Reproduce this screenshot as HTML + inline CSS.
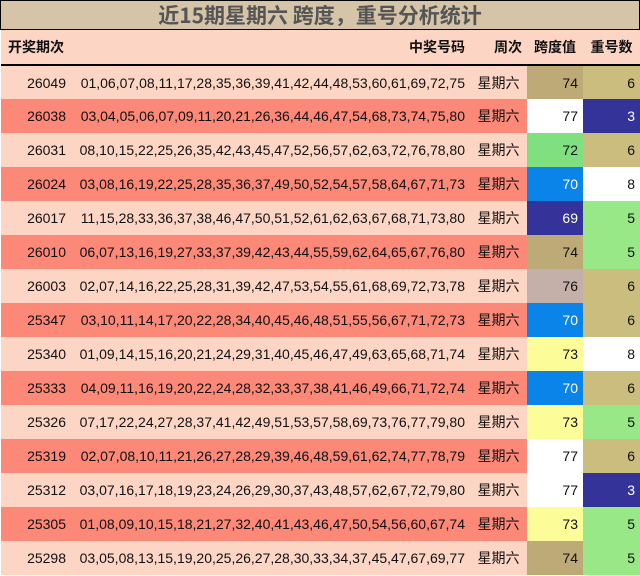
<!DOCTYPE html>
<html><head><meta charset="utf-8"><style>
*{margin:0;padding:0;box-sizing:border-box}
body{width:640px;height:576px;background:#fff;font-family:"Liberation Sans","Noto Sans CJK SC",sans-serif;overflow:hidden;position:relative}
.title{position:absolute;left:0;top:0;width:640px;height:30px;background:#d5c4a8;border:1px solid #000;text-align:center;font:bold 21px/28px "Liberation Serif","Noto Sans CJK SC",serif;color:#555}
.title span{font-family:"Noto Sans CJK SC",sans-serif}
table{position:absolute;left:1px;top:30px;width:639px;border-collapse:collapse;table-layout:fixed}
td{height:34px;font-size:14px;color:#111;white-space:nowrap;text-align:right;padding-right:5px}
tr.h td{height:35px;font-weight:bold;background:#fcd5c4;border-bottom:2px solid #000}
tr.l td{background:#fcd5c4}
tr.d td{background:#fc8878}
td.w{text-align:center;padding-right:0}
td.c1{padding-right:6px}
</style></head><body>
<div class="title"><span>近15期星期六 跨度，重号分析统计</span></div>
<table>
<colgroup><col style="width:70px"><col style="width:399px"><col style="width:57px"><col style="width:56px"><col style="width:57px"></colgroup>
<tr class="h"><td style="text-align:left;padding-left:7px">开奖期次</td><td>中奖号码</td><td>周次</td><td style="text-align:center;padding:0">跨度值</td><td style="text-align:center;padding:0">重号数</td></tr>
<tr class="l"><td>26049</td><td>01,06,07,08,11,17,28,35,36,39,41,42,44,48,53,60,61,69,72,75</td><td class="w">星期六</td><td style="background:#bdaa76">74</td><td style="background:#cbbd7e">6</td></tr>
<tr class="d"><td>26038</td><td>03,04,05,06,07,09,11,20,21,26,36,44,46,47,54,68,73,74,75,80</td><td class="w">星期六</td><td style="background:#fff">77</td><td style="background:#333399;color:#fff">3</td></tr>
<tr class="l"><td>26031</td><td>08,10,15,22,25,26,35,42,43,45,47,52,56,57,62,63,72,76,78,80</td><td class="w">星期六</td><td style="background:#80e080">72</td><td style="background:#cbbd7e">6</td></tr>
<tr class="d"><td>26024</td><td>03,08,16,19,22,25,28,35,36,37,49,50,52,54,57,58,64,67,71,73</td><td class="w">星期六</td><td style="background:#0a84e8;color:#fff">70</td><td style="background:#fff">8</td></tr>
<tr class="l"><td>26017</td><td>11,15,28,33,36,37,38,46,47,50,51,52,61,62,63,67,68,71,73,80</td><td class="w">星期六</td><td style="background:#333399;color:#fff">69</td><td style="background:#98e888">5</td></tr>
<tr class="d"><td>26010</td><td>06,07,13,16,19,27,33,37,39,42,43,44,55,59,62,64,65,67,76,80</td><td class="w">星期六</td><td style="background:#bdaa76">74</td><td style="background:#98e888">5</td></tr>
<tr class="l"><td>26003</td><td>02,07,14,16,22,25,28,31,39,42,47,53,54,55,61,68,69,72,73,78</td><td class="w">星期六</td><td style="background:#c4b0a8">76</td><td style="background:#cbbd7e">6</td></tr>
<tr class="d"><td>25347</td><td>03,10,11,14,17,20,22,28,34,40,45,46,48,51,55,56,67,71,72,73</td><td class="w">星期六</td><td style="background:#0a84e8;color:#fff">70</td><td style="background:#cbbd7e">6</td></tr>
<tr class="l"><td>25340</td><td>01,09,14,15,16,20,21,24,29,31,40,45,46,47,49,63,65,68,71,74</td><td class="w">星期六</td><td style="background:#fcfc98">73</td><td style="background:#fff">8</td></tr>
<tr class="d"><td>25333</td><td>04,09,11,16,19,20,22,24,28,32,33,37,38,41,46,49,66,71,72,74</td><td class="w">星期六</td><td style="background:#0a84e8;color:#fff">70</td><td style="background:#cbbd7e">6</td></tr>
<tr class="l"><td>25326</td><td>07,17,22,24,27,28,37,41,42,49,51,53,57,58,69,73,76,77,79,80</td><td class="w">星期六</td><td style="background:#fcfc98">73</td><td style="background:#98e888">5</td></tr>
<tr class="d"><td>25319</td><td>02,07,08,10,11,21,26,27,28,29,39,46,48,59,61,62,74,77,78,79</td><td class="w">星期六</td><td style="background:#fff">77</td><td style="background:#cbbd7e">6</td></tr>
<tr class="l"><td>25312</td><td>03,07,16,17,18,19,23,24,26,29,30,37,43,48,57,62,67,72,79,80</td><td class="w">星期六</td><td style="background:#fff">77</td><td style="background:#333399;color:#fff">3</td></tr>
<tr class="d"><td>25305</td><td>01,08,09,10,15,18,21,27,32,40,41,43,46,47,50,54,56,60,67,74</td><td class="w">星期六</td><td style="background:#fcfc98">73</td><td style="background:#98e888">5</td></tr>
<tr class="l"><td>25298</td><td>03,05,08,13,15,19,20,25,26,27,28,30,33,34,37,45,47,67,69,77</td><td class="w">星期六</td><td style="background:#bdaa76">74</td><td style="background:#98e888">5</td></tr>
</table>
</body></html>
